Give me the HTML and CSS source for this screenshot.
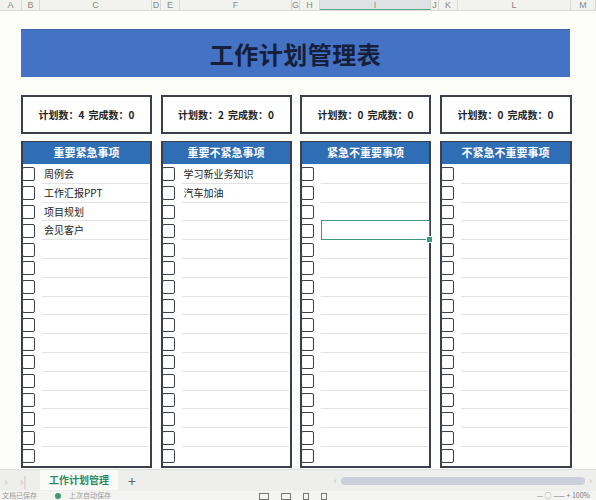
FILE: index.html
```html
<!DOCTYPE html>
<html lang="zh">
<head>
<meta charset="utf-8">
<link rel="stylesheet" href="styles.css">
</head>
<body>
<div class="app">
  <div class="colhead grid">
    <span>A</span><span>B</span><span>C</span><span>D</span><span>E</span><span>F</span><span>G</span><span>H</span><span class="sel">I</span><span>J</span><span>K</span><span>L</span><span>M</span>
  </div>
  <div class="sheet">
    <div class="title">工作计划管理表</div>
    <div class="stats">
      <div class="stat">计划数：4 完成数：0</div>
      <div class="stat">计划数：2 完成数：0</div>
      <div class="stat">计划数：0 完成数：0</div>
      <div class="stat">计划数：0 完成数：0</div>
    </div>
    <div class="lists">
      <div class="list" id="l1"><div class="lhead">重要紧急事项</div><div class="rows"></div></div>
      <div class="list" id="l2"><div class="lhead">重要不紧急事项</div><div class="rows"></div></div>
      <div class="list" id="l3"><div class="lhead">紧急不重要事项</div><div class="rows"></div></div>
      <div class="list" id="l4"><div class="lhead">不紧急不重要事项</div><div class="rows"></div></div>
    </div>
  </div>
  <div class="tabbar">
    <div class="navs"><span class="nav">›</span><span class="nav">›|</span></div>
    <div class="tab">工作计划管理</div>
    <div class="plus">+</div>
    <div class="hscroll"><span class="sb-l">‹</span><div class="thumb"></div><span class="sb-r">›</span></div>
  </div>
  <div class="status">
    <span class="st-l">文档已保存</span>
    <span class="st-dot"></span><span class="st-t">上次自动保存</span>
    <span class="st-icons"><span class="ic"></span><span class="ic"></span><span class="ic sm"></span><span class="ic sm"></span></span>
    <span class="st-zoom">— ○ —— +  100%</span>
  </div>
</div>
<script>
(function(){
  var data = {
    l1: ["周例会","工作汇报PPT","项目规划","会见客户"],
    l2: ["学习新业务知识","汽车加油"],
    l3: [], l4: []
  };
  Object.keys(data).forEach(function(id){
    var rows = document.querySelector('#'+id+' .rows');
    for (var i=0;i<16;i++){
      var r = document.createElement('div'); r.className='row';
      var cb = document.createElement('span'); cb.className='cb';
      var t = document.createElement('span'); t.className='txt';
      t.textContent = data[id][i] || '';
      if (id==='l3' && i===3) t.className += ' active';
      r.appendChild(cb); r.appendChild(t); rows.appendChild(r);
    }
  });
})();
</script>
</body>
</html>
```
FILE: styles.css
```css
* { box-sizing: border-box; }
html, body { margin: 0; padding: 0; }
body {
  width: 596px; height: 500px; overflow: hidden;
  background: #fcfcf8;
  font-family: "Noto Sans CJK SC", "Noto Sans", sans-serif;
  color: #222;
}
.app { position: relative; width: 596px; height: 500px; }
.grid {
  display: grid;
  grid-template-columns: 22px 18px 112px 9px 19px 112px 8px 20px 111px 8px 19px 113px 25px;
}
.colhead {
  height: 11px;
  background: #f2f2ee;
  border-bottom: 1px solid #dcdcd6;
  font-family: "Liberation Sans", sans-serif;
  font-size: 9px;
  line-height: 10px;
  color: #8a8a8a;
}
.colhead span {
  text-align: center;
  border-right: 1px solid #d8d8d2;
  height: 10px;
}
.colhead span.sel {
  background: #dfe2e4;
  border-bottom: 1px solid #5aa88a;
}
.sheet {
  padding: 18px 0 0 21px;
  height: 457px;
}
.title {
  width: 549px;
  height: 48px;
  background: #4472c4;
  color: #16203a;
  font-size: 24px;
  font-weight: 700;
  text-align: center;
  line-height: 47px;
  letter-spacing: 0.5px;
  border-top: 1px solid #3d63a6;
}
.stats, .lists {
  display: grid;
  grid-template-columns: 131px 131px 131px 132px;
  column-gap: 8.5px;
  width: 550px;
}
.stats { margin-top: 18px; }
.stat {
  height: 39px;
  border: 2px solid #3b3f4c;
  background: #fff;
  font-size: 10px;
  font-weight: 700;
  line-height: 35px;
  text-align: center;
  color: #222;
  word-spacing: 2px;
}
.lists { margin-top: 7px; }
.list {
  border: 2px solid #3b3f4c;
  border-top: 1px solid #3b3f4c;
  background: #fff;
}
.lhead {
  height: 22px;
  background: #2f6eb5;
  color: #fff;
  font-size: 11px;
  font-weight: 700;
  line-height: 21px;
  text-align: center;
}
.rows { display: flex; flex-direction: column; padding-top: 1px; }
.row {
  display: flex;
  height: 18.8px;
  align-items: stretch;
}
.cb {
  width: 17px;
  flex: 0 0 17px;
  display: flex;
  align-items: center;
  position: relative;
}
.cb::before {
  content: "";
  display: block;
  width: 11px;
  height: 12px;
  margin-left: -1px;
  border: 1.5px solid #3b3f4c;
  border-radius: 2px;
  background: #fff;
}
.txt {
  flex: 1;
  margin-left: 2px;
  margin-right: 1px;
  border-bottom: 1px solid #e2e2e2;
  font-size: 10px;
  line-height: 18px;
  padding-left: 2px;
  color: #222;
  position: relative;
}
.row:last-child .txt { border-bottom: none; }
.txt.active {
  border: 1.5px solid #3d9a7c;
  margin-right: -1px;
  margin-top: -1px;
  height: 20px;
}
.txt.active::after {
  content: "";
  position: absolute;
  right: -4px;
  bottom: -4px;
  width: 5px;
  height: 5px;
  background: #3d9a7c;
  border: 1px solid #fff;
}
.tabbar {
  position: absolute;
  left: 0; top: 469px;
  width: 596px; height: 22px;
  background: #eeeeec;
  border-top: 1px solid #dedede;
  display: flex;
  align-items: center;
}
.navs { display: flex; gap: 12px; width: 40px; padding-left: 4px; color: #c4c4c4; font-size: 12px; }
.tab {
  width: 78px;
  height: 20px;
  margin-top: -2px;
  background: #fafaf8;
  color: #2c8a5e;
  font-size: 10px;
  font-weight: 700;
  line-height: 20px;
  text-align: center;
}
.plus { margin-left: 10px; color: #666; font-size: 14px; line-height: 14px; }
.hscroll {
  margin-left: auto;
  margin-right: 4px;
  width: 258px;
  display: flex;
  align-items: center;
  gap: 4px;
  color: #bbb;
  font-size: 9px;
}
.thumb {
  flex: 1;
  height: 8px;
  border-radius: 4px;
  background: #cdcfdb;
}
.status {
  position: absolute;
  left: 0; top: 491px;
  width: 596px; height: 9px;
  background: #f4f4f2;
  font-size: 7px;
  line-height: 9px;
  color: #999;
  overflow: hidden;
  display: flex;
  gap: 8px;
}
.st-l { margin-left: 2px; }
.st-dot { width: 6px; height: 6px; border-radius: 3px; background: #3a9a6a; margin-top: 2px; margin-left: 10px; }
.st-icons { display: flex; gap: 12px; margin-left: 140px; }
.ic { width: 10px; height: 7px; border: 1px solid #777; margin-top: 2px; }
.ic.sm { width: 6px; }
.st-zoom { margin-left: auto; margin-right: 6px; color: #777; }
```
